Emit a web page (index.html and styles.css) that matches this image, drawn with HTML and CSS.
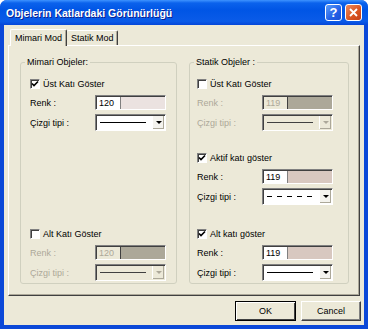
FILE: index.html
```html
<!DOCTYPE html>
<html lang="tr">
  <head>
    <meta charset="UTF-8" />
    <title>Objelerin Katlardaki Görünürlüğü</title>
    <link rel="stylesheet" href="styles.css">
  </head>
  <body>
    <div class="window">
      <div class="titlebar">
        <span class="title">Objelerin Katlardaki Görünürlüğü</span>
        <span class="tb-btn help">?</span>
        <span class="tb-btn close">
          <svg width="9" height="9" viewBox="0 0 9 9"><path d="M1 1 L8 8 M8 1 L1 8" stroke="#fff" stroke-width="1.8" /></svg>
        </span>
      </div>
      <div class="client">
        <div class="tabs">
          <div class="tab active">Mimari Mod</div>
          <div class="tab">Statik Mod</div>
        </div>
        <div class="panel">
          <!-- Mimari -->
          <fieldset class="group group-left">
            <legend>Mimari Objeler:</legend>
            <div class="section first">
              <div class="check"><span class="box"><svg width="8" height="8" viewBox="0 0 8 8"><path d="M1 3.5 L3 5.6 L7 1.5" fill="none" stroke="#000" stroke-width="1.6" /></svg></span>Üst Katı Göster</div>
              <div class="row color-row"><span class="lbl">Renk :</span><span class="color"><span class="num">120</span><span class="swatch light"></span></span></div>
              <div class="row combo-row"><span class="lbl">Çizgi tipi :</span><span class="combo"><span class="line"></span><span class="arrow"></span></span></div>
            </div>
            <div class="section last disabled">
              <div class="check"><span class="box"></span>Alt Katı Göster</div>
              <div class="row color-row"><span class="lbl">Renk :</span><span class="color"><span class="num">120</span><span class="swatch"></span></span></div>
              <div class="row combo-row"><span class="lbl">Çizgi tipi :</span><span class="combo"><span class="line"></span><span class="arrow"></span></span></div>
            </div>
          </fieldset>
          <!-- Statik -->
          <fieldset class="group group-right">
            <legend>Statik Objeler :</legend>
            <div class="section first disabled">
              <div class="check"><span class="box"></span>Üst Katı Göster</div>
              <div class="row color-row"><span class="lbl">Renk :</span><span class="color"><span class="num">119</span><span class="swatch"></span></span></div>
              <div class="row combo-row"><span class="lbl">Çizgi tipi :</span><span class="combo"><span class="line"></span><span class="arrow"></span></span></div>
            </div>
            <div class="section middle">
              <div class="check"><span class="box"><svg width="8" height="8" viewBox="0 0 8 8"><path d="M1 3.5 L3 5.6 L7 1.5" fill="none" stroke="#000" stroke-width="1.6" /></svg></span>Aktif katı göster</div>
              <div class="row color-row"><span class="lbl">Renk :</span><span class="color"><span class="num">119</span><span class="swatch pink"></span></span></div>
              <div class="row combo-row"><span class="lbl">Çizgi tipi :</span><span class="combo"><span class="line dashed"></span><span class="arrow"></span></span></div>
            </div>
            <div class="section last">
              <div class="check"><span class="box"><svg width="8" height="8" viewBox="0 0 8 8"><path d="M1 3.5 L3 5.6 L7 1.5" fill="none" stroke="#000" stroke-width="1.6" /></svg></span>Alt katı göster</div>
              <div class="row color-row"><span class="lbl">Renk :</span><span class="color"><span class="num">119</span><span class="swatch pink"></span></span></div>
              <div class="row combo-row"><span class="lbl">Çizgi tipi :</span><span class="combo"><span class="line"></span><span class="arrow"></span></span></div>
            </div>
          </fieldset>
        </div>
        <div class="buttons">
          <button class="btn default">OK</button>
          <button class="btn cancel">Cancel</button>
        </div>
      </div>
    </div>
  </body>
</html>
```

FILE: styles.css
```css
/* Diyalog penceresi - XP görünümü */
body {
  margin: 0;
  background: #fff;
  font-family: "Liberation Sans", Arial, sans-serif;
  font-size: 9px;
  color: #000;
}

.window {
  width: 368px;
  height: 329px;
  display: flex;
  flex-direction: column;
  background: #0b48d8;
  border-radius: 7px 7px 0 0;
  overflow: hidden;
}

/* Başlık çubuğu */
.titlebar {
  height: 25px;
  flex: none;
  display: flex;
  align-items: center;
  padding: 0 6px;
  background: linear-gradient(#3e93ff 0, #0b62ec 3px, #0055e5 40%, #0a5be8 85%, #0546d8 100%);
}
.title {
  flex: 1;
  color: #fff;
  font-weight: bold;
  font-size: 10.5px;
  text-shadow: 1px 1px #0c1f8f;
}
.tb-btn {
  width: 17px;
  height: 17px;
  box-sizing: border-box;
  margin-left: 3px;
  border: 1px solid #fff;
  border-radius: 3px;
  display: flex;
  align-items: center;
  justify-content: center;
  color: #fff;
  font-weight: bold;
  font-size: 13px;
}
.help {
  background: linear-gradient(135deg, #5c9dfa, #2360e6 60%, #1b4fd5);
}
.close {
  background: linear-gradient(135deg, #ec8a5f, #d9531f 60%, #c3401a);
}

/* İçerik alanı */
.client {
  flex: 1;
  margin: 0 4px 4px;
  padding: 4px 4px 0;
  background: #ece9d8;
  display: flex;
  flex-direction: column;
}

/* Sekmeler */
.tabs {
  height: 16px;
  display: flex;
  align-items: flex-end;
  padding-left: 2px;
}
.tab {
  height: 14px;
  line-height: 14px;
  padding: 0 3px 0 4px;
  border-top: 1px solid #fff;
  border-right: 1px solid #404040;
  border-radius: 2px 2px 0 0;
  box-shadow: inset -1px 0 #aca899;
  background: #ece9d8;
}
.tab.active {
  position: relative;
  z-index: 1;
  height: 16px;
  line-height: 16px;
  margin-bottom: -1px;
  padding: 0 4px;
  border-left: 1px solid #fff;
}

.panel {
  height: 251px;
  box-sizing: border-box;
  flex: none;
  display: flex;
  gap: 12px;
  padding: 10px 10px 11px 11px;
  border: 1px solid #fff;
  border-right-color: #404040;
  border-bottom-color: #404040;
  box-shadow: inset -1px -1px #aca899;
}

/* Grup kutuları */
.group {
  margin: 0;
  padding: 0 0 2px;
  min-width: 0;
  border: 1px solid #d0d0bf;
  border-radius: 3px;
  display: flex;
  flex-direction: column;
}
.group-left { width: 157px; box-sizing: border-box; }
.group-right { width: 160px; box-sizing: border-box; }
.group legend {
  margin-left: 4px;
  padding: 0 2px;
  line-height: 12px;
}
.group-left .section { padding-left: 9px; }
.group-right .section { padding-left: 7px; }

.section {
  display: flex;
  flex-direction: column;
}
.section.first { margin-top: 10px; }
.section.middle { margin-top: 21px; }
.section.last { margin-top: auto; }

.check {
  height: 12px;
  display: flex;
  align-items: center;
  gap: 3px;
}
.box {
  width: 10px;
  height: 10px;
  box-sizing: border-box;
  background: #fff;
  border: 1px solid;
  border-color: #808080 #fff #fff #808080;
  box-shadow: inset 1px 1px #404040;
  display: flex;
  align-items: center;
  justify-content: center;
}

.row {
  display: flex;
  align-items: center;
}
.color-row { margin-top: 5px; }
.combo-row { margin-top: 4px; }
.lbl { width: 65px; }
.disabled .row .lbl { color: #aca899; }

/* Renk kutusu */
.color {
  width: 71px;
  height: 15px;
  box-sizing: border-box;
  display: flex;
  border: 1px solid;
  border-color: #808080 #fff #fff #808080;
  box-shadow: inset 1px 1px #404040;
  padding: 1px 0 0 1px;
}
.num {
  width: 21px;
  padding-left: 2px;
  line-height: 12px;
  background: #fff;
  border-right: 1px solid #808080;
}
.swatch {
  flex: 1;
  background: #aca899;
}
.swatch.light { background: #ebe2e0; }
.swatch.pink { background: #d8c8c0; }
.disabled .num {
  background: #ece9d8;
  color: #aca899;
  border-right-color: #404040;
}

/* Çizgi tipi kutusu */
.combo {
  width: 71px;
  height: 17px;
  box-sizing: border-box;
  display: flex;
  align-items: center;
  background: #fff;
  border: 1px solid;
  border-color: #808080 #fff #fff #808080;
  box-shadow: inset 1px 1px #404040;
  padding: 1px;
}
.line {
  flex: 1;
  height: 1px;
  margin: 0 6px 0 3px;
  background: #000;
}
.line.dashed {
  background: repeating-linear-gradient(90deg, #000 0 5px, transparent 5px 10px);
}
.arrow {
  width: 12px;
  align-self: stretch;
  box-sizing: border-box;
  border-left: 1px solid #fff;
  box-shadow: inset -1px -1px #aca899;
  background: #f4f3ee;
  display: flex;
  align-items: center;
  justify-content: center;
}
.arrow::after {
  content: "";
  border-left: 3px solid transparent;
  border-right: 3px solid transparent;
  border-top: 3px solid #000;
}
.disabled .combo { background: #ece9d8; }
.disabled .line { background: #404040; }
.disabled .arrow { background: #ece9d8; }
.disabled .arrow::after { border-top-color: #aca899; }

/* Alt düğmeler */
.buttons {
  display: flex;
  justify-content: flex-end;
  gap: 5px;
  margin-top: 5px;
  margin-right: -1px;
}
.btn {
  height: 20px;
  margin: 0;
  padding: 0;
  font-family: "Liberation Sans", Arial, sans-serif;
  font-size: 9px;
  color: #000;
  background: #ece9d8;
  border: 1px solid;
  border-color: #fff #404040 #404040 #fff;
  box-shadow: inset -1px -1px #808080;
}
.btn.default {
  width: 61px;
  border-color: #000;
  box-shadow: inset 1px 1px #fff, inset -1px -1px #404040;
}
.btn.cancel { width: 60px; }
```
